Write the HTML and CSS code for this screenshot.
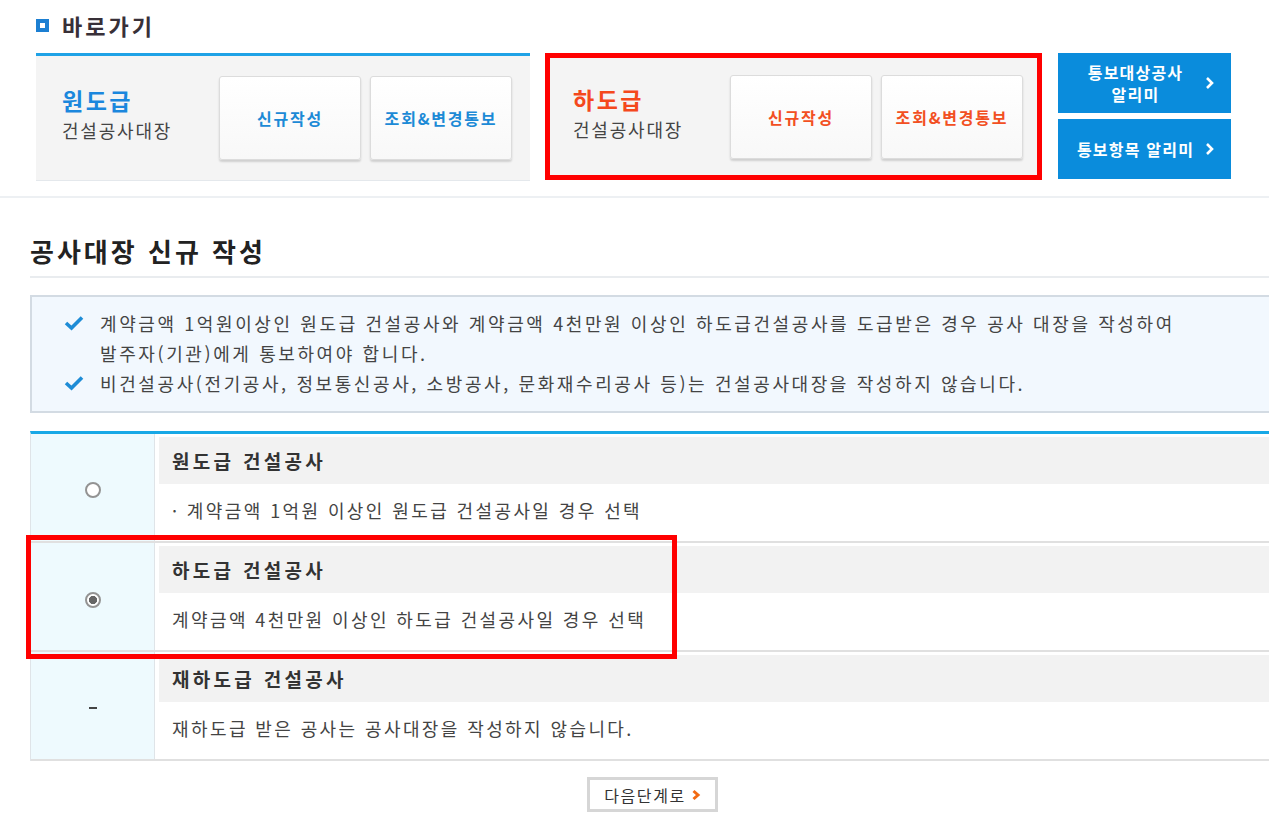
FILE: index.html
```html
<!DOCTYPE html>
<html lang="ko">

<head>
    <meta charset="UTF-8">
    <meta name="viewport" content="width=device-width, initial-scale=1.0">
    <title>공사대장 신규 작성</title>
    <link rel="stylesheet" href="styles.css">
</head>

<body>
    <div class="quick">
        <h2 class="quick-title"><span class="sq"></span>바로가기</h2>
        <div class="quick-row">
            <div class="quick-box">
                <div class="quick-name">
                    <strong class="blue">원도급</strong>
                    <span>건설공사대장</span>
                </div>
                <a href="#" class="quick-btn blue">신규작성</a>
                <a href="#" class="quick-btn blue">조회&amp;변경통보</a>
            </div>
            <div class="quick-box marked">
                <div class="quick-name">
                    <strong class="orange">하도급</strong>
                    <span>건설공사대장</span>
                </div>
                <a href="#" class="quick-btn orange">신규작성</a>
                <a href="#" class="quick-btn orange">조회&amp;변경통보</a>
            </div>
            <div class="notice-btns">
                <a href="#" class="notice-btn">
                    <span>통보대상공사<br>알리미</span>
                    <svg width="10" height="14" viewBox="0 0 10 14"><polyline points="2,2 7,7 2,12" fill="none" stroke="#fff" stroke-width="2.6"/></svg>
                </a>
                <a href="#" class="notice-btn">
                    <span>통보항목 알리미</span>
                    <svg width="10" height="14" viewBox="0 0 10 14"><polyline points="2,2 7,7 2,12" fill="none" stroke="#fff" stroke-width="2.6"/></svg>
                </a>
            </div>
        </div>
    </div>

    <div class="content">
        <h1 class="page-title">공사대장 신규 작성</h1>

        <ul class="info">
            <li>
                <svg class="check" width="20" height="16" viewBox="0 0 20 16"><polyline points="2,8 7.5,13 18,2.5" fill="none" stroke="#1e8cd6" stroke-width="3.6"/></svg>
                계약금액 1억원이상인 원도급 건설공사와 계약금액 4천만원 이상인 하도급건설공사를 도급받은 경우 공사 대장을 작성하여<br>발주자(기관)에게 통보하여야 합니다.
            </li>
            <li>
                <svg class="check" width="20" height="16" viewBox="0 0 20 16"><polyline points="2,8 7.5,13 18,2.5" fill="none" stroke="#1e8cd6" stroke-width="3.6"/></svg>
                비건설공사(전기공사, 정보통신공사, 소방공사, 문화재수리공사 등)는 건설공사대장을 작성하지 않습니다.
            </li>
        </ul>

        <div class="type-table">
            <div class="type-row">
                <div class="type-pick"><span class="radio"></span></div>
                <div class="type-desc">
                    <div class="type-name">원도급 건설공사</div>
                    <p>· 계약금액 1억원 이상인 원도급 건설공사일 경우 선택</p>
                </div>
            </div>
            <div class="type-row">
                <div class="type-pick"><span class="radio checked"></span></div>
                <div class="type-desc">
                    <div class="type-name">하도급 건설공사</div>
                    <p>계약금액 4천만원 이상인 하도급 건설공사일 경우 선택</p>
                </div>
                <div class="mark-box"></div>
            </div>
            <div class="type-row">
                <div class="type-pick"><span class="dash"></span></div>
                <div class="type-desc">
                    <div class="type-name">재하도급 건설공사</div>
                    <p>재하도급 받은 공사는 공사대장을 작성하지 않습니다.</p>
                </div>
            </div>
        </div>

        <div class="next-wrap">
            <a href="#" class="next-btn">다음단계로
                <svg width="10" height="12" viewBox="0 0 10 12"><polyline points="2.5,2 7,6 2.5,10" fill="none" stroke="#f26a12" stroke-width="3"/></svg>
            </a>
        </div>
    </div>
</body>

</html>
```

FILE: styles.css
```css
/* base */
body {
    margin: 0;
    font-family: "Noto Sans CJK KR", "Noto Sans", sans-serif;
    color: #333;
    background-color: white;
    overflow: hidden;
}

a {
    text-decoration: none;
}

/* quick links */
.quick {
    height: 186px;
    padding: 10px 0 0 36px;
    border-bottom: 2px solid #edf0f3;
}

.quick-title {
    display: flex;
    align-items: center;
    margin: 0;
    height: 30px;
    font-size: 22px;
    font-weight: 600;
    letter-spacing: 3px;
    color: #383038;
}

.quick-title .sq {
    width: 5px;
    height: 5px;
    border: 4px solid #1c7fd2;
    margin-right: 13px;
    background-color: white;
}

.quick-row {
    display: flex;
    margin-top: 13px;
}

.quick-box {
    display: flex;
    align-items: center;
    box-sizing: border-box;
    width: 494px;
    height: 128px;
    padding-left: 26px;
    background-color: #f4f4f4;
    border-top: 3px solid #1fa2e6;
    border-bottom: 1px solid #e4e8ec;
}

.quick-box.marked {
    width: 487px;
    height: 117px;
    margin: 5px 5px 0 20px;
    padding-left: 23px;
    border: none;
    outline: 5px solid #ff0000;
}

.quick-name {
    width: 157px;
    margin-top: -6px;
    display: flex;
    flex-direction: column;
}

.quick-name strong {
    font-size: 23px;
    letter-spacing: 2.5px;
    line-height: 30px;
}

.quick-name span {
    font-size: 18px;
    letter-spacing: 1.8px;
    color: #444;
    line-height: 30px;
}

.blue {
    color: #1b87dd;
}

.orange {
    color: #f4481c;
}

.quick-btn {
    display: flex;
    align-items: center;
    justify-content: center;
    box-sizing: border-box;
    width: 142px;
    height: 84px;
    margin-right: 9px;
    border: 1px solid #dcdcdc;
    border-radius: 3px;
    background: linear-gradient(#ffffff, #f8f8f8);
    box-shadow: 0 2px 2px rgba(0, 0, 0, 0.15);
    font-size: 16px;
    font-weight: bold;
    letter-spacing: 1.8px;
}

.quick-btn.blue {
    color: #1c8ad6;
}

.quick-btn.orange {
    color: #f24f22;
}

.notice-btns {
    display: flex;
    flex-direction: column;
    gap: 6px;
    margin-left: 16px;
}

.notice-btn {
    display: flex;
    align-items: center;
    width: 173px;
    height: 60px;
    box-sizing: border-box;
    padding: 0 16px 0 8px;
    background-color: #0a8cdc;
    color: white;
    font-size: 16px;
    font-weight: bold;
    line-height: 22px;
    letter-spacing: 1.2px;
}

.notice-btn span {
    flex: 1;
    text-align: center;
}

/* main content */
.content {
    width: 1245px;
    margin-left: 30px;
}

.page-title {
    margin: 35px 0 0;
    padding-bottom: 7px;
    font-size: 26px;
    line-height: 36px;
    letter-spacing: 3px;
    color: #222;
    border-bottom: 2px solid #e9ecef;
}

.info {
    list-style: none;
    margin: 17px 0 0;
    padding: 11px 0 13px 32px;
    background-color: #f2f8fe;
    border: 2px solid #d3dbe3;
    font-size: 18px;
    line-height: 30px;
    letter-spacing: 2.6px;
    color: #444;
}

.info li {
    position: relative;
    padding-left: 36px;
}

.info .check {
    position: absolute;
    left: 0;
    top: 7px;
}

/* type table */
.type-table {
    margin-top: 18px;
    border-top: 3px solid #17a8e6;
    border-left: 1px solid #dfe4e8;
}

.type-row {
    position: relative;
    display: flex;
    height: 109px;
    box-sizing: border-box;
    border-bottom: 2px solid #e0e0e0;
}

.type-pick {
    width: 123px;
    display: flex;
    align-items: center;
    justify-content: center;
    background-color: #eefafe;
    border-right: 1px solid #dfe4e8;
}

.radio {
    width: 16px;
    height: 16px;
    box-sizing: border-box;
    border: 2px solid #939393;
    border-radius: 50%;
    background-color: white;
    margin-top: 5px;
}

.radio.checked {
    margin-top: 7px;
    background: radial-gradient(circle, #666 0 3.8px, white 4.4px);
}

.dash {
    width: 8px;
    height: 2px;
    margin-top: 4px;
    background-color: #444;
}

.type-desc {
    flex: 1;
    padding: 3px 0 0 4px;
}

.type-name {
    height: 47px;
    line-height: 47px;
    padding-left: 13px;
    background-color: #f2f2f2;
    font-size: 19px;
    font-weight: bold;
    letter-spacing: 3.3px;
    color: #333;
}

.type-desc p {
    margin: 0;
    padding-left: 13px;
    line-height: 52px;
    font-size: 18px;
    letter-spacing: 2.4px;
    color: #444;
}

.mark-box {
    position: absolute;
    z-index: 1;
    left: -5px;
    top: -8px;
    width: 651px;
    height: 124px;
    box-sizing: border-box;
    border: 5px solid #ff0000;
}

/* next button */
.next-wrap {
    display: flex;
    justify-content: center;
    margin-top: 16px;
}

.next-btn {
    display: flex;
    align-items: center;
    justify-content: center;
    gap: 5px;
    width: 131px;
    height: 35px;
    box-sizing: border-box;
    border: 3px solid #d6d6d6;
    background-color: white;
    color: #333;
    font-size: 16px;
    letter-spacing: 1.6px;
}
```
